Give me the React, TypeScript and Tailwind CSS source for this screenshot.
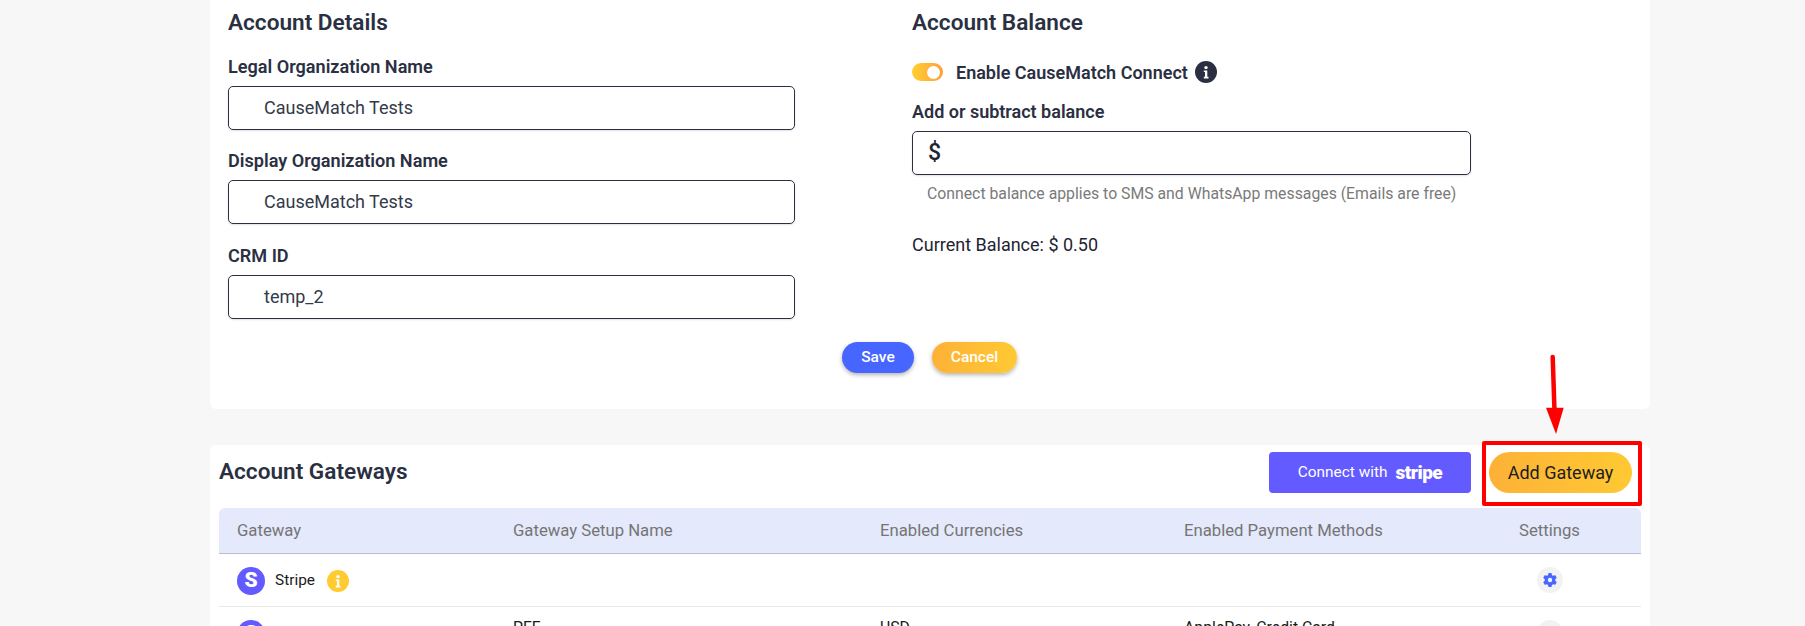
import { FaGear } from "react-icons/fa6";

const ink = "text-[#2a3042]";

function Field({ label, value, top }: { label: string; value: string; top: string }) {
  return (
    <div className={top}>
      <div className={`${ink} text-[18.1px] leading-[20px] font-semibold`}>{label}</div>
      <div className="mt-[9px] h-[44px] w-[567px] rounded-[5px] border border-[#2a3042] pl-[35px] pb-[2px] flex items-center text-[18px] text-[#333a4a] shadow-[0_1px_2px_rgba(0,0,0,0.12)]">
        {value}
      </div>
    </div>
  );
}

function InfoDot({ bg, size }: { bg: string; size: string }) {
  return (
    <span className={`${bg} ${size} rounded-full inline-flex items-center justify-center shrink-0`}>
      <svg viewBox="0 0 22 22" className="w-full h-full">
        <circle cx="11" cy="6.6" r="1.7" fill="#fff" />
        <path d="M8.8 9.4h3.5v6.4h1.2v1.6H8.8v-1.6h1.2v-4.8H8.8z" fill="#fff" />
      </svg>
    </span>
  );
}

function Row({ name, setup, cur, pay, info }: { name: string; setup?: string; cur?: string; pay?: string; info?: boolean }) {
  return (
    <div className="grid grid-cols-[276px_367px_304px_335px_1fr] px-[18px] h-[53px] border-b border-[#e8e8e8] text-[#1c1c1c] text-[15.8px]">
      <div className="flex items-center pt-[1px]">
        <span className="w-[28px] h-[28px] rounded-full bg-[#635bff] text-white flex items-center justify-center font-black text-[21px] leading-none">S</span>
        {name && <span className="ml-[10px] text-[15.4px]">{name}</span>}
        {info && <span className="ml-[12px] flex"><InfoDot bg="bg-[#ffcb30]" size="w-[22px] h-[22px]" /></span>}
      </div>
      <div className="pt-[11px] leading-[20px]">{setup}</div>
      <div className="pt-[11px] leading-[20px]">{cur}</div>
      <div className="pt-[11px] leading-[20px]">{pay}</div>
      <div className="flex items-center pl-[18px]">
        <span className="w-[26px] h-[26px] rounded-full bg-[#f2f2f2] flex items-center justify-center text-[#4766ff]">
          <FaGear className="w-[14px] h-[14px]" />
        </span>
      </div>
    </div>
  );
}

export default function App() {
  return (
    <div className="relative h-[626px] w-[1805px] overflow-hidden bg-[#f7f7f7] pl-[210px] font-['Roboto',sans-serif]">
      <section className="w-[1440px] h-[409px] bg-white rounded-b-[6px] pl-[18px] pt-[10px] relative">
        <div className="flex">
          <div className="w-[684px]">
            <h2 className={`${ink} text-[22.6px] leading-[26px] font-semibold`}>Account Details</h2>
            <Field top="mt-[21px]" label="Legal Organization Name" value="CauseMatch Tests" />
            <Field top="mt-[21px]" label="Display Organization Name" value="CauseMatch Tests" />
            <Field top="mt-[22px]" label="CRM ID" value="temp_2" />
          </div>
          <div>
            <h2 className={`${ink} text-[22.6px] leading-[26px] font-semibold`}>Account Balance</h2>
            <div className="mt-[24px] flex items-center h-[24px]">
              <span className="w-[31px] h-[18px] rounded-full bg-gradient-to-r from-[#ffd02f] to-[#ff9f38] flex items-center justify-end pr-[3px]">
                <span className="w-[13px] h-[13px] rounded-full bg-white" />
              </span>
              <span className={`${ink} ml-[13px] text-[18px] font-semibold`}>Enable CauseMatch Connect</span>
              <span className="ml-[7px] flex"><InfoDot bg="bg-[#2a3042]" size="w-[22px] h-[22px]" /></span>
            </div>
            <div className={`${ink} mt-[18px] text-[18px] leading-[20px] font-semibold`}>Add or subtract balance</div>
            <div className="mt-[9px] h-[44px] w-[559px] rounded-[5px] border border-[#2a3042] pl-[15px] flex items-center text-[23px] font-medium text-[#1f2433] shadow-[0_1px_2px_rgba(0,0,0,0.12)]">
              $
            </div>
            <p className="mt-[9px] pl-[15px] text-[15.8px] leading-[20px] text-[#7a7a7a]">
              Connect balance applies to SMS and WhatsApp messages (Emails are free)
            </p>
            <p className="mt-[30px] text-[18px] leading-[22px] text-[#1f2433]">Current Balance: $ 0.50</p>
          </div>
        </div>
        <div className="absolute left-[632px] top-[342px] flex gap-[18px] text-white text-[15.5px] font-medium">
          <button className="w-[72px] h-[31px] rounded-full bg-[#4766ff] shadow-[0_2px_4px_rgba(0,0,0,0.3)]">Save</button>
          <button className="w-[85px] h-[31px] rounded-full bg-gradient-to-r from-[#fdb137] to-[#ffc933] shadow-[0_2px_4px_rgba(0,0,0,0.3)]">Cancel</button>
        </div>
      </section>

      <section className="mt-[36px] w-[1440px] h-[300px] bg-white rounded-t-[6px] pl-[9px] pr-[9px] pt-[7px]">
        <div className="flex items-start justify-between pr-[9px]">
          <h2 className={`${ink} text-[22.6px] leading-[26px] font-semibold mt-[7px]`}>Account Gateways</h2>
          <div className="flex gap-[18px]">
            <button className="w-[202px] h-[41px] rounded-[4px] bg-[#635bff] text-white flex items-center justify-center gap-[8px] text-[15.4px]">
              <span>Connect with</span>
              <span className="font-black text-[19px] tracking-[-0.5px] leading-none">stripe</span>
            </button>
            <button className="w-[143px] h-[41px] rounded-full bg-gradient-to-r from-[#fdb137] to-[#ffc933] text-[#1d1d1d] text-[18px]">Add Gateway</button>
          </div>
        </div>
        <div className="mt-[15px] w-[1422px]">
          <div className="grid grid-cols-[276px_367px_304px_335px_1fr] px-[18px] h-[46px] items-center rounded-t-[6px] bg-[#e4e9fb] border-b-[1.5px] border-[#b8bdd0] text-[#757575] text-[16.7px]">
            <div>Gateway</div>
            <div>Gateway Setup Name</div>
            <div>Enabled Currencies</div>
            <div>Enabled Payment Methods</div>
            <div>Settings</div>
          </div>
          <Row name="Stripe" info />
          <Row name="" setup="PFF" cur="USD" pay="ApplePay, Credit Card" />
        </div>
      </section>

      <div className="absolute left-[1482px] top-[441px] w-[160px] h-[65px] border-[4px] border-[#ff0000] rounded-[2px]" />
      <svg className="absolute left-[1540px] top-[350px]" width="30" height="90" viewBox="0 0 30 90">
        <path d="M12.7 7 L14.4 58" stroke="#ff0000" strokeWidth="4.5" strokeLinecap="round" fill="none" />
        <path d="M6 57.7 H23.7 L16 84 Z" fill="#ff0000" />
      </svg>
    </div>
  );
}
